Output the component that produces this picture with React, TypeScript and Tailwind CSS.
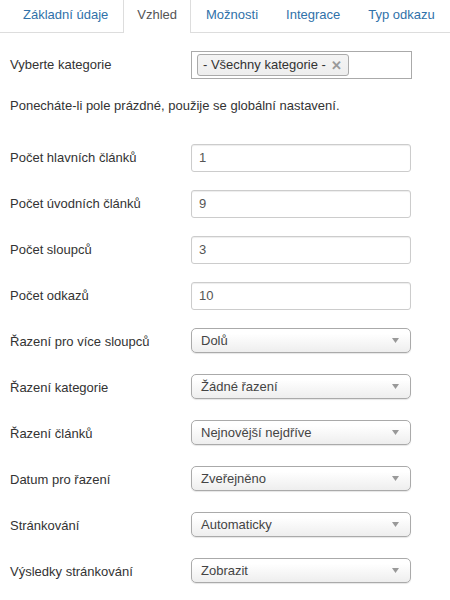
import React from "react";

const font = { fontFamily: '"Liberation Sans", Arial, sans-serif' };

function Tabs() {
  const tabs = ["Základní údaje", "Vzhled", "Možnosti", "Integrace", "Typ odkazu"];
  return (
    <div className="flex pl-[10px] h-[33px] border-b border-[#ddd]">
      {tabs.map((t, i) =>
        i === 1 ? (
          <div
            key={t}
            className="px-[13px] mr-[2px] h-[33px] -mb-px flex items-center bg-white border-x border-[#ddd] text-[#555] text-[13px] pb-[3px]"
          >
            {t}
          </div>
        ) : (
          <div
            key={t}
            className="px-[13px] mr-[2px] h-[32px] flex items-center text-[#3071a9] text-[13px] pb-[3px] whitespace-nowrap"
          >
            {t}
          </div>
        )
      )}
    </div>
  );
}

function Row({ label, children, top }: { label: string; children: React.ReactNode; top?: boolean }) {
  return (
    <div className="flex items-center h-[28px] mb-[18px]">
      <div className="w-[181px] text-[13px] text-[#333]">{label}</div>
      <div className={top ? "w-[220px] self-start" : "w-[220px]"}>{children}</div>
    </div>
  );
}

function TextInput({ value }: { value: string }) {
  return (
    <div className="h-[28px] w-[220px] border border-[#ccc] rounded-[3px] bg-white shadow-[inset_0_1px_1px_rgba(0,0,0,0.075)] flex items-center pl-[7px] text-[13px] text-[#555]">
      {value}
    </div>
  );
}

function Select({ value }: { value: string }) {
  return (
    <div className="h-[25px] w-[220px] border border-[#aaa] rounded-[5px] bg-gradient-to-b from-white from-20% to-[#eeeeee] shadow-[0_1px_1px_rgba(0,0,0,0.1)] flex items-center justify-between pl-[9px] pr-[11px] text-[13px] text-[#444]">
      <span>{value}</span>
      <svg width="7" height="5" viewBox="0 0 7 5">
        <polygon points="0,0 7,0 3.5,5" fill="#999" />
      </svg>
    </div>
  );
}

export default function App() {
  return (
    <div className="w-[450px] h-[600px] bg-white overflow-hidden" style={font}>
      <Tabs />
      <div className="pl-[10px] pt-[18px]">
        <Row label="Vyberte kategorie">
          <div className="h-[28px] w-[221px] border border-[#aaa] bg-white flex items-center pl-[5px]">
            <div className="h-[22px] border border-[#aaa] rounded-[3px] bg-gradient-to-b from-[#f4f4f4] to-[#eeeeee] flex items-center pl-[5px] pr-[6px] text-[13px] text-[#333]">
              <span>- Všechny kategorie -</span>
              <span className="ml-[5px] text-[#999] font-bold text-[13px] leading-none">✕</span>
            </div>
          </div>
        </Row>
        <div className="text-[13px] text-[#333] leading-[18px] mb-[29px]">
          Ponecháte-li pole prázdné, použije se globální nastavení.
        </div>
        <Row label="Počet hlavních článků">
          <TextInput value="1" />
        </Row>
        <Row label="Počet úvodních článků">
          <TextInput value="9" />
        </Row>
        <Row label="Počet sloupců">
          <TextInput value="3" />
        </Row>
        <Row label="Počet odkazů">
          <TextInput value="10" />
        </Row>
        <Row label="Řazení pro více sloupců" top>
          <Select value="Dolů" />
        </Row>
        <Row label="Řazení kategorie" top>
          <Select value="Žádné řazení" />
        </Row>
        <Row label="Řazení článků" top>
          <Select value="Nejnovější nejdříve" />
        </Row>
        <Row label="Datum pro řazení" top>
          <Select value="Zveřejněno" />
        </Row>
        <Row label="Stránkování" top>
          <Select value="Automaticky" />
        </Row>
        <Row label="Výsledky stránkování" top>
          <Select value="Zobrazit" />
        </Row>
      </div>
    </div>
  );
}
